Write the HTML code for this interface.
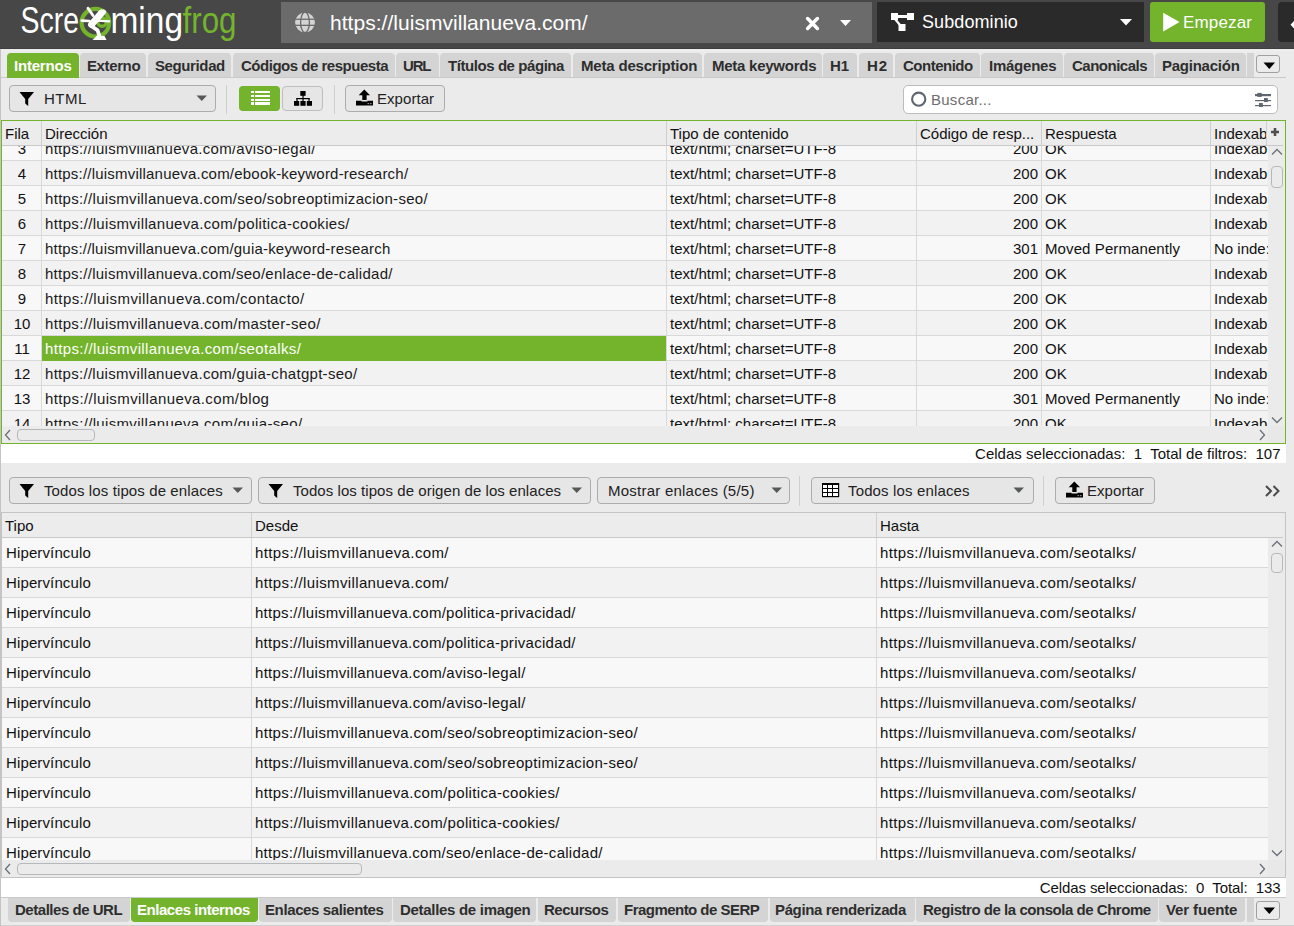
<!DOCTYPE html>
<html><head><meta charset="utf-8"><style>
html,body{margin:0;padding:0;}
body{width:1294px;height:926px;position:relative;overflow:hidden;font-family:"Liberation Sans", sans-serif;background:#ebebeb;}
</style></head><body>
<div style="position:absolute;left:0px;top:0px;width:1294px;height:49px;background:#474747"></div><div style="position:absolute;left:0px;top:48px;width:1294px;height:1px;background:#3f3f3f"></div><svg style="position:absolute;left:0;top:0" width="260" height="48" viewBox="0 0 260 48"><g font-family="Liberation Sans" font-size="37"><text x="20.5" y="33" fill="#fff" textLength="58.5" lengthAdjust="spacingAndGlyphs">Scre</text><text x="110.5" y="33" fill="#fff" textLength="72.5" lengthAdjust="spacingAndGlyphs">ming</text><text x="182.5" y="33" fill="#73b42c" textLength="54" lengthAdjust="spacingAndGlyphs">frog</text></g><circle cx="95.4" cy="22.7" r="13.8" fill="none" stroke="#73b42c" stroke-width="4.2"/><circle cx="102" cy="22" r="4.3" fill="none" stroke="#73b42c" stroke-width="3.4"/><g stroke="#fff" stroke-linecap="round" fill="none"><path d="M101.5 13 L91.5 24.5" stroke-width="6.8"/><path d="M93 15.5 L88 8.2" stroke-width="2.8"/><path d="M89.5 21 L81.8 20.6" stroke-width="2.6"/><path d="M97.5 20.6 L109.3 21.3" stroke-width="2.2"/><path d="M90.5 25.5 L97.5 30.2 L99.3 35.5" stroke-width="3.8"/></g><ellipse cx="102" cy="12.3" rx="4.2" ry="2.6" fill="#fff" transform="rotate(-15 102 12.3)"/><path d="M92.5 40 L106.5 40 L104.5 36 L97 35.5 Z" fill="#fff"/></svg><div style="position:absolute;left:281px;top:2px;width:591px;height:41px;background:#6b6b6b"></div><svg style="position:absolute;left:294px;top:12px" width="22" height="22" viewBox="0 0 22 22"><circle cx="11" cy="10.4" r="9.9" fill="#d4d4d4"/><rect x="0" y="6.6" width="22" height="1.3" fill="#6b6b6b"/><rect x="0" y="12.7" width="22" height="1.3" fill="#6b6b6b"/><ellipse cx="11" cy="10.4" rx="4.4" ry="10.2" fill="none" stroke="#6b6b6b" stroke-width="1.3"/></svg><div style="position:absolute;top:12.22px;line-height:21px;font-size:21px;font-weight:400;color:#ffffff;white-space:pre;letter-spacing:0.03333333333333354px;left:330px;">https://luismvillanueva.com/</div><svg style="position:absolute;left:805px;top:16px" width="15" height="15" viewBox="0 0 15 15"><path d="M2.6 2.6 L12.4 12.4 M12.4 2.6 L2.6 12.4" stroke="#fff" stroke-width="3.5" stroke-linecap="round"/></svg><svg style="position:absolute;left:839px;top:19px" width="13" height="8" viewBox="0 0 13 8"><path d="M1 1 L12 1 L6.5 7 Z" fill="#fff"/></svg><div style="position:absolute;left:877px;top:2px;width:267px;height:40px;background:#2a2a2a"></div><svg style="position:absolute;left:890px;top:12px" width="26" height="20" viewBox="0 0 26 20"><rect x="1" y="1" width="7" height="7" fill="#fff"/><rect x="17" y="1" width="7" height="7" fill="#fff"/><rect x="8.5" y="12" width="7" height="7" fill="#fff"/><rect x="7" y="3" width="11" height="3" fill="#fff"/><path d="M5 7 L10 13" stroke="#fff" stroke-width="2.2"/></svg><div style="position:absolute;top:13.46px;line-height:18px;font-size:18px;font-weight:400;color:#ffffff;white-space:pre;letter-spacing:0.08888888888888857px;left:922px;">Subdominio</div><svg style="position:absolute;left:1119px;top:18px" width="14" height="8" viewBox="0 0 14 8"><path d="M1 1 L13 1 L7 7.5 Z" fill="#fff"/></svg><div style="position:absolute;left:1150px;top:2px;width:115px;height:40px;background:#73b42c;border-radius:3px"></div><svg style="position:absolute;left:1162px;top:12px" width="19" height="21" viewBox="0 0 19 21"><path d="M1.2 0.7 L17.6 10.1 L1.2 19.5 Z" fill="#fff"/></svg><div style="position:absolute;top:14.11px;line-height:17px;font-size:17px;font-weight:400;color:#ffffff;white-space:pre;letter-spacing:0.16666666666666666px;left:1183px;">Empezar</div><div style="position:absolute;left:1278px;top:2px;width:20px;height:40px;background:#2a2a2a;border-radius:4px"></div><svg style="position:absolute;left:1288px;top:18px" width="8" height="14" viewBox="0 0 8 14"><path d="M2.5 6.7 L7 2 L8 2 L8 11.5 L7 11.5 Z" fill="#fff"/></svg><div style="position:absolute;left:0px;top:49px;width:1294px;height:877px;background:#ebebeb"></div><div style="position:absolute;left:0px;top:50px;width:1294px;height:1px;background:#efefef"></div><div style="position:absolute;left:0px;top:49px;width:1px;height:877px;background:#c4c4c4"></div><div style="position:absolute;left:1px;top:77px;width:1285px;height:1px;background:#c9c9c9"></div><div style="position:absolute;left:7px;top:53px;width:72px;height:25px;background:#73b42c;border-radius:4px 4px 0 0"></div><div style="position:absolute;top:58.30px;line-height:15px;font-size:15px;font-weight:700;color:#ffffff;white-space:pre;letter-spacing:-0.1999999999999998px;left:14px;">Internos</div><div style="position:absolute;left:80px;top:53px;width:66px;height:24px;background:#d4d4d4;border-radius:4px 4px 0 0"></div><div style="position:absolute;top:58.30px;line-height:15px;font-size:15px;font-weight:700;color:#2e2e2e;white-space:pre;letter-spacing:-0.38333333333333286px;left:87px;">Externo</div><div style="position:absolute;left:148px;top:53px;width:83px;height:24px;background:#d4d4d4;border-radius:4px 4px 0 0"></div><div style="position:absolute;top:58.30px;line-height:15px;font-size:15px;font-weight:700;color:#2e2e2e;white-space:pre;letter-spacing:-0.3874999999999993px;left:155px;">Seguridad</div><div style="position:absolute;left:233px;top:53px;width:162px;height:24px;background:#d4d4d4;border-radius:4px 4px 0 0"></div><div style="position:absolute;top:58.30px;line-height:15px;font-size:15px;font-weight:700;color:#2e2e2e;white-space:pre;letter-spacing:-0.48421052631578887px;left:241px;">Códigos de respuesta</div><div style="position:absolute;left:396px;top:53px;width:43px;height:24px;background:#d4d4d4;border-radius:4px 4px 0 0"></div><div style="position:absolute;top:58.30px;line-height:15px;font-size:15px;font-weight:700;color:#2e2e2e;white-space:pre;letter-spacing:-1.1999999999999993px;left:403px;">URL</div><div style="position:absolute;left:440px;top:53px;width:131px;height:24px;background:#d4d4d4;border-radius:4px 4px 0 0"></div><div style="position:absolute;top:58.30px;line-height:15px;font-size:15px;font-weight:700;color:#2e2e2e;white-space:pre;letter-spacing:-0.43125000000000036px;left:448px;">Títulos de página</div><div style="position:absolute;left:573px;top:53px;width:129px;height:24px;background:#d4d4d4;border-radius:4px 4px 0 0"></div><div style="position:absolute;top:58.30px;line-height:15px;font-size:15px;font-weight:700;color:#2e2e2e;white-space:pre;letter-spacing:-0.18666666666666648px;left:581px;">Meta description</div><div style="position:absolute;left:704px;top:53px;width:118px;height:24px;background:#d4d4d4;border-radius:4px 4px 0 0"></div><div style="position:absolute;top:58.30px;line-height:15px;font-size:15px;font-weight:700;color:#2e2e2e;white-space:pre;letter-spacing:-0.25px;left:712px;">Meta keywords</div><div style="position:absolute;left:823px;top:53px;width:34px;height:24px;background:#d4d4d4;border-radius:4px 4px 0 0"></div><div style="position:absolute;top:58.30px;line-height:15px;font-size:15px;font-weight:700;color:#2e2e2e;white-space:pre;left:830px;">H1</div><div style="position:absolute;left:859px;top:53px;width:34px;height:24px;background:#d4d4d4;border-radius:4px 4px 0 0"></div><div style="position:absolute;top:58.30px;line-height:15px;font-size:15px;font-weight:700;color:#2e2e2e;white-space:pre;letter-spacing:0.8000000000000007px;left:867px;">H2</div><div style="position:absolute;left:895px;top:53px;width:85px;height:24px;background:#d4d4d4;border-radius:4px 4px 0 0"></div><div style="position:absolute;top:58.30px;line-height:15px;font-size:15px;font-weight:700;color:#2e2e2e;white-space:pre;letter-spacing:-0.5px;left:903px;">Contenido</div><div style="position:absolute;left:981px;top:53px;width:82px;height:24px;background:#d4d4d4;border-radius:4px 4px 0 0"></div><div style="position:absolute;top:58.30px;line-height:15px;font-size:15px;font-weight:700;color:#2e2e2e;white-space:pre;letter-spacing:-0.24285714285714327px;left:989px;">Imágenes</div><div style="position:absolute;left:1064px;top:53px;width:90px;height:24px;background:#d4d4d4;border-radius:4px 4px 0 0"></div><div style="position:absolute;top:58.30px;line-height:15px;font-size:15px;font-weight:700;color:#2e2e2e;white-space:pre;letter-spacing:-0.5px;left:1072px;">Canonicals</div><div style="position:absolute;left:1155px;top:53px;width:91px;height:24px;background:#d4d4d4;border-radius:4px 4px 0 0"></div><div style="position:absolute;top:58.30px;line-height:15px;font-size:15px;font-weight:700;color:#2e2e2e;white-space:pre;letter-spacing:-0.24444444444444477px;left:1162px;">Paginación</div><div style="position:absolute;left:1247px;top:53px;width:7px;height:24px;background:#d4d4d4;border-radius:0"></div><div style="position:absolute;left:1256px;top:55px;width:24px;height:18px;border:1px solid #a0a0a0;border-radius:3px;box-sizing:border-box;background:#ebebeb"></div><svg style="position:absolute;left:1263px;top:62px" width="13" height="8" viewBox="0 0 13 8"><path d="M0.5 0.5 L12 0.5 L6.25 7 Z" fill="#000"/></svg><div style="position:absolute;left:9px;top:85px;width:207px;height:27px;border:1px solid #acacac;border-radius:4px;box-sizing:border-box;background:#e6e6e6"></div><svg style="position:absolute;left:19px;top:91px" width="16" height="16" viewBox="0 0 16 16"><path d="M0.5 1 L15 1 L9.2 8 L9.2 15 L6.2 12.5 L6.2 8 Z" fill="#000"/></svg><div style="position:absolute;top:90.80px;line-height:15px;font-size:15px;font-weight:400;color:#222;white-space:pre;letter-spacing:0.5px;left:44px;">HTML</div><svg style="position:absolute;left:196px;top:95px" width="12" height="7" viewBox="0 0 12 7"><path d="M0.5 0.5 L11 0.5 L5.75 6 Z" fill="#555a55"/></svg><div style="position:absolute;left:226px;top:85px;width:1px;height:29px;background:#cfcfcf"></div><div style="position:absolute;left:239px;top:86px;width:41px;height:25px;background:#73b42c;border-radius:4px"></div><svg style="position:absolute;left:250px;top:90px" width="22" height="16" viewBox="0 0 22 16"><rect x="1" y="1" width="3" height="2" fill="#fff"/><rect x="5" y="1" width="15" height="2" fill="#fff"/><rect x="1" y="5" width="3" height="2" fill="#fff"/><rect x="5" y="5" width="15" height="2" fill="#fff"/><rect x="1" y="9" width="3" height="2" fill="#fff"/><rect x="5" y="9" width="15" height="2" fill="#fff"/><rect x="1" y="12" width="3" height="3" fill="#fff"/><rect x="5" y="12" width="15" height="3" fill="#fff"/></svg><div style="position:absolute;left:282px;top:86px;width:41px;height:25px;border:1px solid #bdbdbd;border-radius:4px;box-sizing:border-box;background:#e6e6e6"></div><svg style="position:absolute;left:292px;top:90px" width="22" height="17" viewBox="0 0 22 17"><rect x="8.3" y="1" width="5.3" height="4.8" fill="#000"/><rect x="10.4" y="5" width="1.2" height="3.5" fill="#000"/><rect x="4.4" y="8" width="13.2" height="1.2" fill="#000"/><rect x="4.4" y="8" width="1.2" height="3.5" fill="#000"/><rect x="10.4" y="8" width="1.2" height="3.5" fill="#000"/><rect x="16.4" y="8" width="1.2" height="3.5" fill="#000"/><rect x="2" y="11" width="5.2" height="4.8" fill="#000"/><rect x="8.4" y="11" width="5.2" height="4.8" fill="#000"/><rect x="14.8" y="11" width="5.2" height="4.8" fill="#000"/></svg><div style="position:absolute;left:334px;top:85px;width:1px;height:29px;background:#cfcfcf"></div><div style="position:absolute;left:345px;top:85px;width:100px;height:27px;border:1px solid #acacac;border-radius:4px;box-sizing:border-box;background:#e6e6e6"></div><svg style="position:absolute;left:356px;top:89px" width="18" height="18" viewBox="0 0 18 18"><path d="M8.3 0.5 L14 6.3 L10.6 6.3 L10.6 11 L6.3 11 L6.3 6.3 L2.7 6.3 Z" fill="#000"/><path d="M0 11.8 L5.5 11.8 L5.5 12.6 L11.5 12.6 L11.5 11.8 L17 11.8 L17 16.5 L0 16.5 Z" fill="#000"/><rect x="11.5" y="14" width="1.6" height="1.2" fill="#888"/><rect x="14" y="14" width="1.6" height="1.2" fill="#888"/></svg><div style="position:absolute;top:90.80px;line-height:15px;font-size:15px;font-weight:400;color:#222;white-space:pre;letter-spacing:0.05714285714285694px;left:377px;">Exportar</div><div style="position:absolute;left:903px;top:85px;width:375px;height:29px;border:1px solid #bcbcbc;border-radius:5px;box-sizing:border-box;background:#fff"></div><svg style="position:absolute;left:910px;top:91px" width="18" height="18" viewBox="0 0 18 18"><circle cx="8.7" cy="8.2" r="6.6" fill="none" stroke="#5d6670" stroke-width="2.1"/></svg><div style="position:absolute;top:92.30px;line-height:15px;font-size:15px;font-weight:400;color:#6e6e6e;white-space:pre;letter-spacing:0.2625000000000002px;left:931px;">Buscar...</div><svg style="position:absolute;left:1254px;top:92px" width="18" height="16" viewBox="0 0 18 16"><rect x="1" y="2" width="16" height="2.2" fill="#5f6670"/><rect x="3.4" y="0.9" width="4.3" height="4" fill="#5f6670"/><rect x="1" y="8" width="16" height="1.2" fill="#5f6670"/><rect x="10" y="6" width="3.8" height="4" fill="#5f6670"/><rect x="1" y="13" width="16" height="1.2" fill="#5f6670"/><rect x="5" y="11" width="3.8" height="4" fill="#5f6670"/></svg><div style="position:absolute;left:1px;top:120px;width:1285px;height:324px;border:1px solid #73b42c;box-sizing:border-box;background:#ebebeb"></div><div style="position:absolute;left:2px;top:146px;width:1266px;height:280px;overflow:hidden"><div style="position:absolute;left:0px;top:-10px;width:1266px;height:24px;background:#f8f8f8"></div><div style="position:absolute;left:0px;top:14px;width:1266px;height:1px;background:#d9d9d9"></div><div style="position:absolute;left:0px;top:15px;width:1266px;height:24px;background:#f2f2f2"></div><div style="position:absolute;left:0px;top:39px;width:1266px;height:1px;background:#d9d9d9"></div><div style="position:absolute;left:0px;top:40px;width:1266px;height:24px;background:#f8f8f8"></div><div style="position:absolute;left:0px;top:64px;width:1266px;height:1px;background:#d9d9d9"></div><div style="position:absolute;left:0px;top:65px;width:1266px;height:24px;background:#f2f2f2"></div><div style="position:absolute;left:0px;top:89px;width:1266px;height:1px;background:#d9d9d9"></div><div style="position:absolute;left:0px;top:90px;width:1266px;height:24px;background:#f8f8f8"></div><div style="position:absolute;left:0px;top:114px;width:1266px;height:1px;background:#d9d9d9"></div><div style="position:absolute;left:0px;top:115px;width:1266px;height:24px;background:#f2f2f2"></div><div style="position:absolute;left:0px;top:139px;width:1266px;height:1px;background:#d9d9d9"></div><div style="position:absolute;left:0px;top:140px;width:1266px;height:24px;background:#f8f8f8"></div><div style="position:absolute;left:0px;top:164px;width:1266px;height:1px;background:#d9d9d9"></div><div style="position:absolute;left:0px;top:165px;width:1266px;height:24px;background:#f2f2f2"></div><div style="position:absolute;left:0px;top:189px;width:1266px;height:1px;background:#d9d9d9"></div><div style="position:absolute;left:0px;top:190px;width:1266px;height:24px;background:#f8f8f8"></div><div style="position:absolute;left:0px;top:214px;width:1266px;height:1px;background:#d9d9d9"></div><div style="position:absolute;left:0px;top:215px;width:1266px;height:24px;background:#f2f2f2"></div><div style="position:absolute;left:0px;top:239px;width:1266px;height:1px;background:#d9d9d9"></div><div style="position:absolute;left:0px;top:240px;width:1266px;height:24px;background:#f8f8f8"></div><div style="position:absolute;left:0px;top:264px;width:1266px;height:1px;background:#d9d9d9"></div><div style="position:absolute;left:0px;top:265px;width:1266px;height:24px;background:#f2f2f2"></div><div style="position:absolute;left:0px;top:289px;width:1266px;height:1px;background:#d9d9d9"></div><div style="position:absolute;left:39px;top:0px;width:1px;height:280px;background:#d9d9d9"></div><div style="position:absolute;left:664px;top:0px;width:1px;height:280px;background:#d9d9d9"></div><div style="position:absolute;left:914px;top:0px;width:1px;height:280px;background:#d9d9d9"></div><div style="position:absolute;left:1039px;top:0px;width:1px;height:280px;background:#d9d9d9"></div><div style="position:absolute;left:1208px;top:0px;width:1px;height:280px;background:#d9d9d9"></div><div style="position:absolute;top:-5.10px;line-height:15px;font-size:15px;font-weight:400;color:#111;white-space:pre;left:0.00px;width:40px;text-align:center;">3</div><div style="position:absolute;top:-5.10px;line-height:15px;font-size:15px;font-weight:400;color:#1a1a1a;white-space:pre;letter-spacing:0.2846153846153852px;left:43px;">https://luismvillanueva.com/aviso-legal/</div><div style="position:absolute;top:-5.10px;line-height:15px;font-size:15px;font-weight:400;color:#111;white-space:pre;letter-spacing:0.026086956521738883px;left:668px;">text/html; charset=UTF-8</div><div style="position:absolute;top:-5.10px;line-height:15px;font-size:15px;font-weight:400;color:#111;white-space:pre;right:230px;text-align:right;">200</div><div style="position:absolute;top:-5.10px;line-height:15px;font-size:15px;font-weight:400;color:#111;white-space:pre;left:1043px;">OK</div><div style="position:absolute;top:-5.10px;line-height:15px;font-size:15px;font-weight:400;color:#111;white-space:pre;left:1212px;">Indexab</div><div style="position:absolute;top:19.90px;line-height:15px;font-size:15px;font-weight:400;color:#111;white-space:pre;left:0.00px;width:40px;text-align:center;">4</div><div style="position:absolute;top:19.90px;line-height:15px;font-size:15px;font-weight:400;color:#1a1a1a;white-space:pre;letter-spacing:0.20799999999999955px;left:43px;">https://luismvillanueva.com/ebook-keyword-research/</div><div style="position:absolute;top:19.90px;line-height:15px;font-size:15px;font-weight:400;color:#111;white-space:pre;letter-spacing:0.026086956521738883px;left:668px;">text/html; charset=UTF-8</div><div style="position:absolute;top:19.90px;line-height:15px;font-size:15px;font-weight:400;color:#111;white-space:pre;right:230px;text-align:right;">200</div><div style="position:absolute;top:19.90px;line-height:15px;font-size:15px;font-weight:400;color:#111;white-space:pre;left:1043px;">OK</div><div style="position:absolute;top:19.90px;line-height:15px;font-size:15px;font-weight:400;color:#111;white-space:pre;left:1212px;">Indexab</div><div style="position:absolute;top:44.90px;line-height:15px;font-size:15px;font-weight:400;color:#111;white-space:pre;left:0.00px;width:40px;text-align:center;">5</div><div style="position:absolute;top:44.90px;line-height:15px;font-size:15px;font-weight:400;color:#1a1a1a;white-space:pre;letter-spacing:0.3150943396226413px;left:43px;">https://luismvillanueva.com/seo/sobreoptimizacion-seo/</div><div style="position:absolute;top:44.90px;line-height:15px;font-size:15px;font-weight:400;color:#111;white-space:pre;letter-spacing:0.026086956521738883px;left:668px;">text/html; charset=UTF-8</div><div style="position:absolute;top:44.90px;line-height:15px;font-size:15px;font-weight:400;color:#111;white-space:pre;right:230px;text-align:right;">200</div><div style="position:absolute;top:44.90px;line-height:15px;font-size:15px;font-weight:400;color:#111;white-space:pre;left:1043px;">OK</div><div style="position:absolute;top:44.90px;line-height:15px;font-size:15px;font-weight:400;color:#111;white-space:pre;left:1212px;">Indexab</div><div style="position:absolute;top:69.90px;line-height:15px;font-size:15px;font-weight:400;color:#111;white-space:pre;left:0.00px;width:40px;text-align:center;">6</div><div style="position:absolute;top:69.90px;line-height:15px;font-size:15px;font-weight:400;color:#1a1a1a;white-space:pre;letter-spacing:0.32727272727272677px;left:43px;">https://luismvillanueva.com/politica-cookies/</div><div style="position:absolute;top:69.90px;line-height:15px;font-size:15px;font-weight:400;color:#111;white-space:pre;letter-spacing:0.026086956521738883px;left:668px;">text/html; charset=UTF-8</div><div style="position:absolute;top:69.90px;line-height:15px;font-size:15px;font-weight:400;color:#111;white-space:pre;right:230px;text-align:right;">200</div><div style="position:absolute;top:69.90px;line-height:15px;font-size:15px;font-weight:400;color:#111;white-space:pre;left:1043px;">OK</div><div style="position:absolute;top:69.90px;line-height:15px;font-size:15px;font-weight:400;color:#111;white-space:pre;left:1212px;">Indexab</div><div style="position:absolute;top:94.90px;line-height:15px;font-size:15px;font-weight:400;color:#111;white-space:pre;left:0.00px;width:40px;text-align:center;">7</div><div style="position:absolute;top:94.90px;line-height:15px;font-size:15px;font-weight:400;color:#1a1a1a;white-space:pre;letter-spacing:0.19375000000000023px;left:43px;">https://luismvillanueva.com/guia-keyword-research</div><div style="position:absolute;top:94.90px;line-height:15px;font-size:15px;font-weight:400;color:#111;white-space:pre;letter-spacing:0.026086956521738883px;left:668px;">text/html; charset=UTF-8</div><div style="position:absolute;top:94.90px;line-height:15px;font-size:15px;font-weight:400;color:#111;white-space:pre;right:230px;text-align:right;">301</div><div style="position:absolute;top:94.90px;line-height:15px;font-size:15px;font-weight:400;color:#111;white-space:pre;letter-spacing:0.09999999999999964px;left:1043px;">Moved Permanently</div><div style="position:absolute;top:94.90px;line-height:15px;font-size:15px;font-weight:400;color:#111;white-space:pre;left:1212px;">No inde:</div><div style="position:absolute;top:119.90px;line-height:15px;font-size:15px;font-weight:400;color:#111;white-space:pre;left:0.00px;width:40px;text-align:center;">8</div><div style="position:absolute;top:119.90px;line-height:15px;font-size:15px;font-weight:400;color:#1a1a1a;white-space:pre;letter-spacing:0.2673469387755107px;left:43px;">https://luismvillanueva.com/seo/enlace-de-calidad/</div><div style="position:absolute;top:119.90px;line-height:15px;font-size:15px;font-weight:400;color:#111;white-space:pre;letter-spacing:0.026086956521738883px;left:668px;">text/html; charset=UTF-8</div><div style="position:absolute;top:119.90px;line-height:15px;font-size:15px;font-weight:400;color:#111;white-space:pre;right:230px;text-align:right;">200</div><div style="position:absolute;top:119.90px;line-height:15px;font-size:15px;font-weight:400;color:#111;white-space:pre;left:1043px;">OK</div><div style="position:absolute;top:119.90px;line-height:15px;font-size:15px;font-weight:400;color:#111;white-space:pre;left:1212px;">Indexab</div><div style="position:absolute;top:144.90px;line-height:15px;font-size:15px;font-weight:400;color:#111;white-space:pre;left:0.00px;width:40px;text-align:center;">9</div><div style="position:absolute;top:144.90px;line-height:15px;font-size:15px;font-weight:400;color:#1a1a1a;white-space:pre;letter-spacing:0.4166666666666667px;left:43px;">https://luismvillanueva.com/contacto/</div><div style="position:absolute;top:144.90px;line-height:15px;font-size:15px;font-weight:400;color:#111;white-space:pre;letter-spacing:0.026086956521738883px;left:668px;">text/html; charset=UTF-8</div><div style="position:absolute;top:144.90px;line-height:15px;font-size:15px;font-weight:400;color:#111;white-space:pre;right:230px;text-align:right;">200</div><div style="position:absolute;top:144.90px;line-height:15px;font-size:15px;font-weight:400;color:#111;white-space:pre;left:1043px;">OK</div><div style="position:absolute;top:144.90px;line-height:15px;font-size:15px;font-weight:400;color:#111;white-space:pre;left:1212px;">Indexab</div><div style="position:absolute;top:169.90px;line-height:15px;font-size:15px;font-weight:400;color:#111;white-space:pre;left:0.00px;width:40px;text-align:center;">10</div><div style="position:absolute;top:169.90px;line-height:15px;font-size:15px;font-weight:400;color:#1a1a1a;white-space:pre;letter-spacing:0.3342105263157892px;left:43px;">https://luismvillanueva.com/master-seo/</div><div style="position:absolute;top:169.90px;line-height:15px;font-size:15px;font-weight:400;color:#111;white-space:pre;letter-spacing:0.026086956521738883px;left:668px;">text/html; charset=UTF-8</div><div style="position:absolute;top:169.90px;line-height:15px;font-size:15px;font-weight:400;color:#111;white-space:pre;right:230px;text-align:right;">200</div><div style="position:absolute;top:169.90px;line-height:15px;font-size:15px;font-weight:400;color:#111;white-space:pre;left:1043px;">OK</div><div style="position:absolute;top:169.90px;line-height:15px;font-size:15px;font-weight:400;color:#111;white-space:pre;left:1212px;">Indexab</div><div style="position:absolute;left:40px;top:190px;width:624px;height:25px;background:#73b42c"></div><div style="position:absolute;top:194.90px;line-height:15px;font-size:15px;font-weight:400;color:#111;white-space:pre;left:0.00px;width:40px;text-align:center;">11</div><div style="position:absolute;top:194.90px;line-height:15px;font-size:15px;font-weight:400;color:#ffffff;white-space:pre;letter-spacing:0.36666666666666636px;left:43px;">https://luismvillanueva.com/seotalks/</div><div style="position:absolute;top:194.90px;line-height:15px;font-size:15px;font-weight:400;color:#111;white-space:pre;letter-spacing:0.026086956521738883px;left:668px;">text/html; charset=UTF-8</div><div style="position:absolute;top:194.90px;line-height:15px;font-size:15px;font-weight:400;color:#111;white-space:pre;right:230px;text-align:right;">200</div><div style="position:absolute;top:194.90px;line-height:15px;font-size:15px;font-weight:400;color:#111;white-space:pre;left:1043px;">OK</div><div style="position:absolute;top:194.90px;line-height:15px;font-size:15px;font-weight:400;color:#111;white-space:pre;left:1212px;">Indexab</div><div style="position:absolute;top:219.90px;line-height:15px;font-size:15px;font-weight:400;color:#111;white-space:pre;left:0.00px;width:40px;text-align:center;">12</div><div style="position:absolute;top:219.90px;line-height:15px;font-size:15px;font-weight:400;color:#1a1a1a;white-space:pre;letter-spacing:0.2909090909090912px;left:43px;">https://luismvillanueva.com/guia-chatgpt-seo/</div><div style="position:absolute;top:219.90px;line-height:15px;font-size:15px;font-weight:400;color:#111;white-space:pre;letter-spacing:0.026086956521738883px;left:668px;">text/html; charset=UTF-8</div><div style="position:absolute;top:219.90px;line-height:15px;font-size:15px;font-weight:400;color:#111;white-space:pre;right:230px;text-align:right;">200</div><div style="position:absolute;top:219.90px;line-height:15px;font-size:15px;font-weight:400;color:#111;white-space:pre;left:1043px;">OK</div><div style="position:absolute;top:219.90px;line-height:15px;font-size:15px;font-weight:400;color:#111;white-space:pre;left:1212px;">Indexab</div><div style="position:absolute;top:244.90px;line-height:15px;font-size:15px;font-weight:400;color:#111;white-space:pre;left:0.00px;width:40px;text-align:center;">13</div><div style="position:absolute;top:244.90px;line-height:15px;font-size:15px;font-weight:400;color:#1a1a1a;white-space:pre;letter-spacing:0.3935483870967738px;left:43px;">https://luismvillanueva.com/blog</div><div style="position:absolute;top:244.90px;line-height:15px;font-size:15px;font-weight:400;color:#111;white-space:pre;letter-spacing:0.026086956521738883px;left:668px;">text/html; charset=UTF-8</div><div style="position:absolute;top:244.90px;line-height:15px;font-size:15px;font-weight:400;color:#111;white-space:pre;right:230px;text-align:right;">301</div><div style="position:absolute;top:244.90px;line-height:15px;font-size:15px;font-weight:400;color:#111;white-space:pre;letter-spacing:0.09999999999999964px;left:1043px;">Moved Permanently</div><div style="position:absolute;top:244.90px;line-height:15px;font-size:15px;font-weight:400;color:#111;white-space:pre;left:1212px;">No inde:</div><div style="position:absolute;top:269.90px;line-height:15px;font-size:15px;font-weight:400;color:#111;white-space:pre;left:0.00px;width:40px;text-align:center;">14</div><div style="position:absolute;top:269.90px;line-height:15px;font-size:15px;font-weight:400;color:#1a1a1a;white-space:pre;letter-spacing:0.3333333333333333px;left:43px;">https://luismvillanueva.com/guia-seo/</div><div style="position:absolute;top:269.90px;line-height:15px;font-size:15px;font-weight:400;color:#111;white-space:pre;letter-spacing:0.026086956521738883px;left:668px;">text/html; charset=UTF-8</div><div style="position:absolute;top:269.90px;line-height:15px;font-size:15px;font-weight:400;color:#111;white-space:pre;right:230px;text-align:right;">200</div><div style="position:absolute;top:269.90px;line-height:15px;font-size:15px;font-weight:400;color:#111;white-space:pre;left:1043px;">OK</div><div style="position:absolute;top:269.90px;line-height:15px;font-size:15px;font-weight:400;color:#111;white-space:pre;left:1212px;">Indexab</div></div><div style="position:absolute;left:2px;top:121px;width:1281px;height:24px;background:#ececec"></div><div style="position:absolute;left:2px;top:145px;width:1281px;height:1px;background:#c8c8c8"></div><div style="position:absolute;left:41px;top:121px;width:1px;height:24px;background:#cfcfcf"></div><div style="position:absolute;left:666px;top:121px;width:1px;height:24px;background:#cfcfcf"></div><div style="position:absolute;left:916px;top:121px;width:1px;height:24px;background:#cfcfcf"></div><div style="position:absolute;left:1041px;top:121px;width:1px;height:24px;background:#cfcfcf"></div><div style="position:absolute;left:1210px;top:121px;width:1px;height:24px;background:#cfcfcf"></div><div style="position:absolute;left:1266px;top:121px;width:1px;height:24px;background:#cfcfcf"></div><div style="position:absolute;top:126.30px;line-height:15px;font-size:15px;font-weight:400;color:#111;white-space:pre;left:5px;">Fila</div><div style="position:absolute;top:126.30px;line-height:15px;font-size:15px;font-weight:400;color:#111;white-space:pre;left:45px;">Dirección</div><div style="position:absolute;top:126.30px;line-height:15px;font-size:15px;font-weight:400;color:#111;white-space:pre;left:670px;">Tipo de contenido</div><div style="position:absolute;top:126.30px;line-height:15px;font-size:15px;font-weight:400;color:#111;white-space:pre;left:920px;">Código de resp...</div><div style="position:absolute;top:126.30px;line-height:15px;font-size:15px;font-weight:400;color:#111;white-space:pre;left:1045px;">Respuesta</div><div style="position:absolute;left:1211px;top:121px;width:55px;height:24px;overflow:hidden"><div style="position:absolute;top:5.30px;line-height:15px;font-size:15px;font-weight:400;color:#111;white-space:pre;left:3px;">Indexab</div></div><svg style="position:absolute;left:1270px;top:127px" width="10" height="10" viewBox="0 0 10 10"><path d="M3.7 1 H6.3 V3.7 H9 V6.3 H6.3 V9 H3.7 V6.3 H1 V3.7 H3.7 Z" fill="#4f4f4f"/></svg><div style="position:absolute;left:1268px;top:146px;width:17px;height:280px;background:#ebebeb"></div><svg style="position:absolute;left:1270px;top:147px" width="14" height="9" viewBox="0 0 14 9"><path d="M2 7.5 L7 2.5 L12 7.5" stroke="#6a7078" stroke-width="1.3" fill="none"/></svg><div style="position:absolute;left:1271px;top:166px;width:12px;height:22px;border:1.3px solid #b6b9bb;border-radius:4px;box-sizing:border-box;background:#ebebeb"></div><svg style="position:absolute;left:1270px;top:416px" width="14" height="9" viewBox="0 0 14 9"><path d="M2 1.5 L7 6.5 L12 1.5" stroke="#6a7078" stroke-width="1.3" fill="none"/></svg><div style="position:absolute;left:2px;top:426px;width:1266px;height:17px;background:#ebebeb"></div><svg style="position:absolute;left:3px;top:428px" width="9" height="14" viewBox="0 0 9 14"><path d="M7 2 L2.5 7 L7 12" stroke="#6a7078" stroke-width="1.3" fill="none"/></svg><div style="position:absolute;left:17px;top:429px;width:78px;height:12px;border:1.3px solid #b6b9bb;border-radius:4px;box-sizing:border-box;background:#ebebeb"></div><svg style="position:absolute;left:1258px;top:428px" width="9" height="14" viewBox="0 0 9 14"><path d="M2 2 L6.5 7 L2 12" stroke="#6a7078" stroke-width="1.3" fill="none"/></svg><div style="position:absolute;left:1268px;top:426px;width:17px;height:17px;background:#e8e8e8"></div><div style="position:absolute;left:1px;top:444px;width:1285px;height:19px;background:#ffffff"></div><div style="position:absolute;top:445.50px;line-height:15px;font-size:15px;font-weight:400;color:#111;white-space:pre;letter-spacing:0.010638297872340425px;right:13.5px;text-align:right;">Celdas seleccionadas:  1  Total de filtros:  107</div><div style="position:absolute;left:9px;top:477px;width:243px;height:27px;border:1px solid #acacac;border-radius:4px;box-sizing:border-box;background:#e6e6e6"></div><svg style="position:absolute;left:19px;top:483px" width="16" height="16" viewBox="0 0 16 16"><path d="M0.5 1 L15 1 L9.2 8 L9.2 15 L6.2 12.5 L6.2 8 Z" fill="#000"/></svg><div style="position:absolute;top:483.00px;line-height:15px;font-size:15px;font-weight:400;color:#222;white-space:pre;letter-spacing:0.11200000000000046px;left:44px;">Todos los tipos de enlaces</div><svg style="position:absolute;left:232px;top:487px" width="12" height="7" viewBox="0 0 12 7"><path d="M0.5 0.5 L11 0.5 L5.75 6 Z" fill="#555a55"/></svg><div style="position:absolute;left:258px;top:477px;width:333px;height:27px;border:1px solid #acacac;border-radius:4px;box-sizing:border-box;background:#e6e6e6"></div><svg style="position:absolute;left:268px;top:483px" width="16" height="16" viewBox="0 0 16 16"><path d="M0.5 1 L15 1 L9.2 8 L9.2 15 L6.2 12.5 L6.2 8 Z" fill="#000"/></svg><div style="position:absolute;top:483.00px;line-height:15px;font-size:15px;font-weight:400;color:#222;white-space:pre;letter-spacing:0.05384615384615443px;left:293px;">Todos los tipos de origen de los enlaces</div><svg style="position:absolute;left:571px;top:487px" width="12" height="7" viewBox="0 0 12 7"><path d="M0.5 0.5 L11 0.5 L5.75 6 Z" fill="#555a55"/></svg><div style="position:absolute;left:597px;top:477px;width:193px;height:27px;border:1px solid #acacac;border-radius:4px;box-sizing:border-box;background:#e6e6e6"></div><div style="position:absolute;top:483.00px;line-height:15px;font-size:15px;font-weight:400;color:#222;white-space:pre;letter-spacing:0.23499999999999943px;left:608px;">Mostrar enlaces (5/5)</div><svg style="position:absolute;left:771px;top:487px" width="12" height="7" viewBox="0 0 12 7"><path d="M0.5 0.5 L11 0.5 L5.75 6 Z" fill="#555a55"/></svg><div style="position:absolute;left:799px;top:476px;width:1px;height:30px;background:#cfcfcf"></div><div style="position:absolute;left:811px;top:477px;width:223px;height:27px;border:1px solid #acacac;border-radius:4px;box-sizing:border-box;background:#e6e6e6"></div><svg style="position:absolute;left:821px;top:482px" width="19" height="16" viewBox="0 0 19 16"><rect x="1" y="1" width="17" height="14" fill="#fff"/><rect x="1" y="1" width="17" height="2" fill="#000"/><rect x="1" y="1" width="1" height="14" fill="#000"/><rect x="17" y="1" width="1.2" height="14" fill="#000"/><rect x="1" y="14" width="17" height="1.2" fill="#000"/><rect x="6" y="1" width="1" height="14" fill="#000"/><rect x="11" y="1" width="1" height="14" fill="#000"/><rect x="1" y="6" width="17" height="1" fill="#000"/><rect x="1" y="10" width="17" height="1" fill="#000"/></svg><div style="position:absolute;top:483.00px;line-height:15px;font-size:15px;font-weight:400;color:#222;white-space:pre;letter-spacing:0.14374999999999982px;left:848px;">Todos los enlaces</div><svg style="position:absolute;left:1013px;top:487px" width="12" height="7" viewBox="0 0 12 7"><path d="M0.5 0.5 L11 0.5 L5.75 6 Z" fill="#555a55"/></svg><div style="position:absolute;left:1043px;top:476px;width:1px;height:30px;background:#cfcfcf"></div><div style="position:absolute;left:1055px;top:477px;width:100px;height:27px;border:1px solid #acacac;border-radius:4px;box-sizing:border-box;background:#e6e6e6"></div><svg style="position:absolute;left:1066px;top:481px" width="18" height="18" viewBox="0 0 18 18"><path d="M8.3 0.5 L14 6.3 L10.6 6.3 L10.6 11 L6.3 11 L6.3 6.3 L2.7 6.3 Z" fill="#000"/><path d="M0 11.8 L5.5 11.8 L5.5 12.6 L11.5 12.6 L11.5 11.8 L17 11.8 L17 16.5 L0 16.5 Z" fill="#000"/><rect x="11.5" y="14" width="1.6" height="1.2" fill="#888"/><rect x="14" y="14" width="1.6" height="1.2" fill="#888"/></svg><div style="position:absolute;top:483.00px;line-height:15px;font-size:15px;font-weight:400;color:#222;white-space:pre;letter-spacing:0.05714285714285694px;left:1087px;">Exportar</div><svg style="position:absolute;left:1264px;top:484px" width="18" height="14" viewBox="0 0 18 14"><path d="M2 2 L7 7 L2 12 M9.5 2 L14.5 7 L9.5 12" stroke="#4a4a4a" stroke-width="2" fill="none"/></svg><div style="position:absolute;left:1px;top:512px;width:1285px;height:366px;border:1px solid #c4c4c4;box-sizing:border-box;background:#ebebeb"></div><div style="position:absolute;left:2px;top:538px;width:1266px;height:322px;overflow:hidden"><div style="position:absolute;left:0px;top:0px;width:1266px;height:29px;background:#f8f8f8"></div><div style="position:absolute;left:0px;top:29px;width:1266px;height:1px;background:#d9d9d9"></div><div style="position:absolute;left:0px;top:30px;width:1266px;height:29px;background:#f2f2f2"></div><div style="position:absolute;left:0px;top:59px;width:1266px;height:1px;background:#d9d9d9"></div><div style="position:absolute;left:0px;top:60px;width:1266px;height:29px;background:#f8f8f8"></div><div style="position:absolute;left:0px;top:89px;width:1266px;height:1px;background:#d9d9d9"></div><div style="position:absolute;left:0px;top:90px;width:1266px;height:29px;background:#f2f2f2"></div><div style="position:absolute;left:0px;top:119px;width:1266px;height:1px;background:#d9d9d9"></div><div style="position:absolute;left:0px;top:120px;width:1266px;height:29px;background:#f8f8f8"></div><div style="position:absolute;left:0px;top:149px;width:1266px;height:1px;background:#d9d9d9"></div><div style="position:absolute;left:0px;top:150px;width:1266px;height:29px;background:#f2f2f2"></div><div style="position:absolute;left:0px;top:179px;width:1266px;height:1px;background:#d9d9d9"></div><div style="position:absolute;left:0px;top:180px;width:1266px;height:29px;background:#f8f8f8"></div><div style="position:absolute;left:0px;top:209px;width:1266px;height:1px;background:#d9d9d9"></div><div style="position:absolute;left:0px;top:210px;width:1266px;height:29px;background:#f2f2f2"></div><div style="position:absolute;left:0px;top:239px;width:1266px;height:1px;background:#d9d9d9"></div><div style="position:absolute;left:0px;top:240px;width:1266px;height:29px;background:#f8f8f8"></div><div style="position:absolute;left:0px;top:269px;width:1266px;height:1px;background:#d9d9d9"></div><div style="position:absolute;left:0px;top:270px;width:1266px;height:29px;background:#f2f2f2"></div><div style="position:absolute;left:0px;top:299px;width:1266px;height:1px;background:#d9d9d9"></div><div style="position:absolute;left:0px;top:300px;width:1266px;height:29px;background:#f8f8f8"></div><div style="position:absolute;left:0px;top:329px;width:1266px;height:1px;background:#d9d9d9"></div><div style="position:absolute;left:249px;top:0px;width:1px;height:322px;background:#d9d9d9"></div><div style="position:absolute;left:874px;top:0px;width:1px;height:322px;background:#d9d9d9"></div><div style="position:absolute;top:7.30px;line-height:15px;font-size:15px;font-weight:400;color:#111;white-space:pre;letter-spacing:0.1272727272727278px;left:4px;">Hipervínculo</div><div style="position:absolute;top:7.30px;line-height:15px;font-size:15px;font-weight:400;color:#111;white-space:pre;letter-spacing:0.37407407407407384px;left:253px;">https://luismvillanueva.com/</div><div style="position:absolute;top:7.30px;line-height:15px;font-size:15px;font-weight:400;color:#111;white-space:pre;letter-spacing:0.36666666666666636px;left:878px;">https://luismvillanueva.com/seotalks/</div><div style="position:absolute;top:37.30px;line-height:15px;font-size:15px;font-weight:400;color:#111;white-space:pre;letter-spacing:0.1272727272727278px;left:4px;">Hipervínculo</div><div style="position:absolute;top:37.30px;line-height:15px;font-size:15px;font-weight:400;color:#111;white-space:pre;letter-spacing:0.37407407407407384px;left:253px;">https://luismvillanueva.com/</div><div style="position:absolute;top:37.30px;line-height:15px;font-size:15px;font-weight:400;color:#111;white-space:pre;letter-spacing:0.36666666666666636px;left:878px;">https://luismvillanueva.com/seotalks/</div><div style="position:absolute;top:67.30px;line-height:15px;font-size:15px;font-weight:400;color:#111;white-space:pre;letter-spacing:0.1272727272727278px;left:4px;">Hipervínculo</div><div style="position:absolute;top:67.30px;line-height:15px;font-size:15px;font-weight:400;color:#111;white-space:pre;letter-spacing:0.2744680851063825px;left:253px;">https://luismvillanueva.com/politica-privacidad/</div><div style="position:absolute;top:67.30px;line-height:15px;font-size:15px;font-weight:400;color:#111;white-space:pre;letter-spacing:0.36666666666666636px;left:878px;">https://luismvillanueva.com/seotalks/</div><div style="position:absolute;top:97.30px;line-height:15px;font-size:15px;font-weight:400;color:#111;white-space:pre;letter-spacing:0.1272727272727278px;left:4px;">Hipervínculo</div><div style="position:absolute;top:97.30px;line-height:15px;font-size:15px;font-weight:400;color:#111;white-space:pre;letter-spacing:0.2744680851063825px;left:253px;">https://luismvillanueva.com/politica-privacidad/</div><div style="position:absolute;top:97.30px;line-height:15px;font-size:15px;font-weight:400;color:#111;white-space:pre;letter-spacing:0.36666666666666636px;left:878px;">https://luismvillanueva.com/seotalks/</div><div style="position:absolute;top:127.30px;line-height:15px;font-size:15px;font-weight:400;color:#111;white-space:pre;letter-spacing:0.1272727272727278px;left:4px;">Hipervínculo</div><div style="position:absolute;top:127.30px;line-height:15px;font-size:15px;font-weight:400;color:#111;white-space:pre;letter-spacing:0.2846153846153852px;left:253px;">https://luismvillanueva.com/aviso-legal/</div><div style="position:absolute;top:127.30px;line-height:15px;font-size:15px;font-weight:400;color:#111;white-space:pre;letter-spacing:0.36666666666666636px;left:878px;">https://luismvillanueva.com/seotalks/</div><div style="position:absolute;top:157.30px;line-height:15px;font-size:15px;font-weight:400;color:#111;white-space:pre;letter-spacing:0.1272727272727278px;left:4px;">Hipervínculo</div><div style="position:absolute;top:157.30px;line-height:15px;font-size:15px;font-weight:400;color:#111;white-space:pre;letter-spacing:0.2846153846153852px;left:253px;">https://luismvillanueva.com/aviso-legal/</div><div style="position:absolute;top:157.30px;line-height:15px;font-size:15px;font-weight:400;color:#111;white-space:pre;letter-spacing:0.36666666666666636px;left:878px;">https://luismvillanueva.com/seotalks/</div><div style="position:absolute;top:187.30px;line-height:15px;font-size:15px;font-weight:400;color:#111;white-space:pre;letter-spacing:0.1272727272727278px;left:4px;">Hipervínculo</div><div style="position:absolute;top:187.30px;line-height:15px;font-size:15px;font-weight:400;color:#111;white-space:pre;letter-spacing:0.3150943396226413px;left:253px;">https://luismvillanueva.com/seo/sobreoptimizacion-seo/</div><div style="position:absolute;top:187.30px;line-height:15px;font-size:15px;font-weight:400;color:#111;white-space:pre;letter-spacing:0.36666666666666636px;left:878px;">https://luismvillanueva.com/seotalks/</div><div style="position:absolute;top:217.30px;line-height:15px;font-size:15px;font-weight:400;color:#111;white-space:pre;letter-spacing:0.1272727272727278px;left:4px;">Hipervínculo</div><div style="position:absolute;top:217.30px;line-height:15px;font-size:15px;font-weight:400;color:#111;white-space:pre;letter-spacing:0.3150943396226413px;left:253px;">https://luismvillanueva.com/seo/sobreoptimizacion-seo/</div><div style="position:absolute;top:217.30px;line-height:15px;font-size:15px;font-weight:400;color:#111;white-space:pre;letter-spacing:0.36666666666666636px;left:878px;">https://luismvillanueva.com/seotalks/</div><div style="position:absolute;top:247.30px;line-height:15px;font-size:15px;font-weight:400;color:#111;white-space:pre;letter-spacing:0.1272727272727278px;left:4px;">Hipervínculo</div><div style="position:absolute;top:247.30px;line-height:15px;font-size:15px;font-weight:400;color:#111;white-space:pre;letter-spacing:0.32727272727272677px;left:253px;">https://luismvillanueva.com/politica-cookies/</div><div style="position:absolute;top:247.30px;line-height:15px;font-size:15px;font-weight:400;color:#111;white-space:pre;letter-spacing:0.36666666666666636px;left:878px;">https://luismvillanueva.com/seotalks/</div><div style="position:absolute;top:277.30px;line-height:15px;font-size:15px;font-weight:400;color:#111;white-space:pre;letter-spacing:0.1272727272727278px;left:4px;">Hipervínculo</div><div style="position:absolute;top:277.30px;line-height:15px;font-size:15px;font-weight:400;color:#111;white-space:pre;letter-spacing:0.32727272727272677px;left:253px;">https://luismvillanueva.com/politica-cookies/</div><div style="position:absolute;top:277.30px;line-height:15px;font-size:15px;font-weight:400;color:#111;white-space:pre;letter-spacing:0.36666666666666636px;left:878px;">https://luismvillanueva.com/seotalks/</div><div style="position:absolute;top:307.30px;line-height:15px;font-size:15px;font-weight:400;color:#111;white-space:pre;letter-spacing:0.1272727272727278px;left:4px;">Hipervínculo</div><div style="position:absolute;top:307.30px;line-height:15px;font-size:15px;font-weight:400;color:#111;white-space:pre;letter-spacing:0.2673469387755107px;left:253px;">https://luismvillanueva.com/seo/enlace-de-calidad/</div><div style="position:absolute;top:307.30px;line-height:15px;font-size:15px;font-weight:400;color:#111;white-space:pre;letter-spacing:0.36666666666666636px;left:878px;">https://luismvillanueva.com/seotalks/</div></div><div style="position:absolute;left:2px;top:513px;width:1281px;height:24px;background:#ececec"></div><div style="position:absolute;left:2px;top:537px;width:1281px;height:1px;background:#c8c8c8"></div><div style="position:absolute;left:251px;top:513px;width:1px;height:24px;background:#cfcfcf"></div><div style="position:absolute;left:876px;top:513px;width:1px;height:24px;background:#cfcfcf"></div><div style="position:absolute;top:518.30px;line-height:15px;font-size:15px;font-weight:400;color:#111;white-space:pre;left:5px;">Tipo</div><div style="position:absolute;top:518.30px;line-height:15px;font-size:15px;font-weight:400;color:#111;white-space:pre;left:255px;">Desde</div><div style="position:absolute;top:518.30px;line-height:15px;font-size:15px;font-weight:400;color:#111;white-space:pre;left:880px;">Hasta</div><div style="position:absolute;left:1268px;top:538px;width:17px;height:322px;background:#ebebeb"></div><svg style="position:absolute;left:1270px;top:539px" width="14" height="9" viewBox="0 0 14 9"><path d="M2 7.5 L7 2.5 L12 7.5" stroke="#6a7078" stroke-width="1.3" fill="none"/></svg><div style="position:absolute;left:1271px;top:553px;width:12px;height:20px;border:1.3px solid #b6b9bb;border-radius:4px;box-sizing:border-box;background:#ebebeb"></div><svg style="position:absolute;left:1270px;top:849px" width="14" height="9" viewBox="0 0 14 9"><path d="M2 1.5 L7 6.5 L12 1.5" stroke="#6a7078" stroke-width="1.3" fill="none"/></svg><div style="position:absolute;left:2px;top:860px;width:1266px;height:17px;background:#ebebeb"></div><svg style="position:absolute;left:3px;top:862px" width="9" height="14" viewBox="0 0 9 14"><path d="M7 2 L2.5 7 L7 12" stroke="#6a7078" stroke-width="1.3" fill="none"/></svg><div style="position:absolute;left:17px;top:863px;width:345px;height:12px;border:1.3px solid #b6b9bb;border-radius:4px;box-sizing:border-box;background:#ebebeb"></div><svg style="position:absolute;left:1258px;top:862px" width="9" height="14" viewBox="0 0 9 14"><path d="M2 2 L6.5 7 L2 12" stroke="#6a7078" stroke-width="1.3" fill="none"/></svg><div style="position:absolute;left:1268px;top:860px;width:17px;height:17px;background:#e8e8e8"></div><div style="position:absolute;left:1px;top:878px;width:1285px;height:19px;background:#ffffff"></div><div style="position:absolute;top:879.80px;line-height:15px;font-size:15px;font-weight:400;color:#111;white-space:pre;letter-spacing:-0.08611111111111096px;right:13.5px;text-align:right;">Celdas seleccionadas:  0  Total:  133</div><div style="position:absolute;left:1px;top:897px;width:1285px;height:1px;background:#c9c9c9"></div><div style="position:absolute;left:8px;top:898px;width:122px;height:24px;background:#d4d4d4;border-radius:0 0 4px 4px"></div><div style="position:absolute;top:901.80px;line-height:15px;font-size:15px;font-weight:700;color:#2e2e2e;white-space:pre;letter-spacing:-0.47142857142857103px;left:15px;">Detalles de URL</div><div style="position:absolute;left:131px;top:898px;width:127px;height:24px;background:#73b42c;border-radius:0 0 4px 4px"></div><div style="position:absolute;top:901.80px;line-height:15px;font-size:15px;font-weight:700;color:#ffffff;white-space:pre;letter-spacing:-0.45333333333333314px;left:137px;">Enlaces internos</div><div style="position:absolute;left:259px;top:898px;width:133px;height:24px;background:#d4d4d4;border-radius:0 0 4px 4px"></div><div style="position:absolute;top:901.80px;line-height:15px;font-size:15px;font-weight:700;color:#2e2e2e;white-space:pre;letter-spacing:-0.3875000000000002px;left:265px;">Enlaces salientes</div><div style="position:absolute;left:393px;top:898px;width:143px;height:24px;background:#d4d4d4;border-radius:0 0 4px 4px"></div><div style="position:absolute;top:901.80px;line-height:15px;font-size:15px;font-weight:700;color:#2e2e2e;white-space:pre;letter-spacing:-0.29999999999999966px;left:400px;">Detalles de imagen</div><div style="position:absolute;left:538px;top:898px;width:78px;height:24px;background:#d4d4d4;border-radius:0 0 4px 4px"></div><div style="position:absolute;top:901.80px;line-height:15px;font-size:15px;font-weight:700;color:#2e2e2e;white-space:pre;letter-spacing:-0.5px;left:544px;">Recursos</div><div style="position:absolute;left:618px;top:898px;width:150px;height:24px;background:#d4d4d4;border-radius:0 0 4px 4px"></div><div style="position:absolute;top:901.80px;line-height:15px;font-size:15px;font-weight:700;color:#2e2e2e;white-space:pre;letter-spacing:-0.53125px;left:624px;">Fragmento de SERP</div><div style="position:absolute;left:770px;top:898px;width:145px;height:24px;background:#d4d4d4;border-radius:0 0 4px 4px"></div><div style="position:absolute;top:901.80px;line-height:15px;font-size:15px;font-weight:700;color:#2e2e2e;white-space:pre;letter-spacing:-0.37058823529411833px;left:775px;">Página renderizada</div><div style="position:absolute;left:916px;top:898px;width:242px;height:24px;background:#d4d4d4;border-radius:0 0 4px 4px"></div><div style="position:absolute;top:901.80px;line-height:15px;font-size:15px;font-weight:700;color:#2e2e2e;white-space:pre;letter-spacing:-0.46451612903225825px;left:923px;">Registro de la consola de Chrome</div><div style="position:absolute;left:1159px;top:898px;width:86px;height:24px;background:#d4d4d4;border-radius:0 0 4px 4px"></div><div style="position:absolute;top:901.80px;line-height:15px;font-size:15px;font-weight:700;color:#2e2e2e;white-space:pre;letter-spacing:-0.1222222222222216px;left:1166px;">Ver fuente</div><div style="position:absolute;left:1247px;top:898px;width:7px;height:24px;background:#d4d4d4;border-radius:0"></div><div style="position:absolute;left:1256px;top:901px;width:24px;height:19px;border:1px solid #a0a0a0;border-radius:3px;box-sizing:border-box;background:#ebebeb"></div><svg style="position:absolute;left:1263px;top:907px" width="13" height="8" viewBox="0 0 13 8"><path d="M0.5 0.5 L12 0.5 L6.25 7 Z" fill="#000"/></svg><div style="position:absolute;left:1px;top:925px;width:1293px;height:1px;background:#d0d0d0"></div>
</body></html>
